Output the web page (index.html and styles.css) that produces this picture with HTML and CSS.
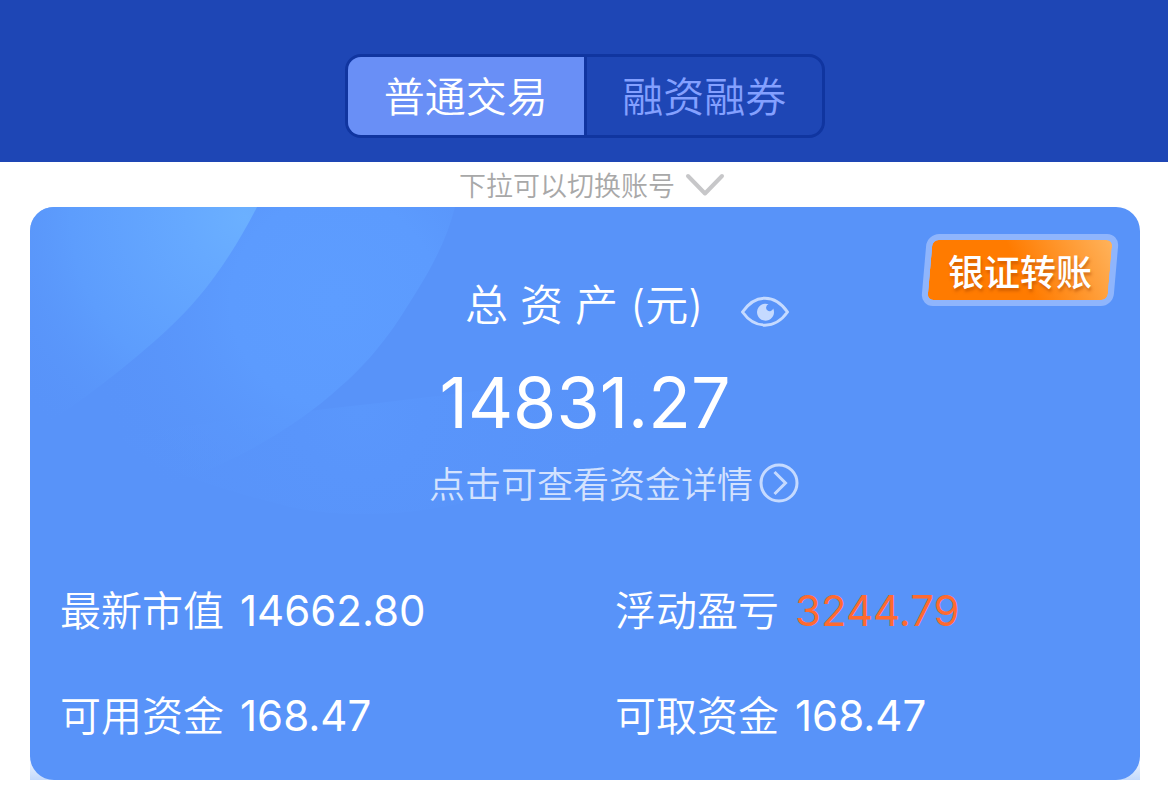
FILE: index.html
```html
<!DOCTYPE html>
<html lang="zh-CN">
<head>
<meta charset="utf-8">
<meta name="viewport" content="width=device-width, initial-scale=1">
<title>总资产</title>
<link rel="stylesheet" href="styles.css">
</head>
<body>
<header class="topbar">
  <nav class="tabs">
    <button type="button" class="tab tab-active">普通交易</button>
    <button type="button" class="tab">融资融券</button>
  </nav>
</header>
<main class="content">
  <button type="button" class="switch-hint">
    <span>下拉可以切换账号</span>
    <svg class="chevron" width="40" height="24" viewBox="0 0 40 24" fill="none" stroke="#c7c7c9" stroke-width="4" stroke-linecap="round" stroke-linejoin="round"><path d="M3 3 20 20.500 37 3"/></svg>
  </button>
  <div class="card-wrap">
    <section class="card">
      <svg class="card-art" width="760" height="340" viewBox="0 0 760 340" aria-hidden="true">
        <defs>
          <radialGradient id="glow-a" gradientUnits="userSpaceOnUse" cx="215" cy="10" r="290">
            <stop offset="0" stop-color="#6bb0ff"/><stop offset=".2" stop-color="#66a9ff"/><stop offset=".6" stop-color="#5d9dfd"/><stop offset="1" stop-color="#5893f9" stop-opacity="0"/>
          </radialGradient>
          <radialGradient id="glow-b" gradientUnits="userSpaceOnUse" cx="305" cy="95" r="260">
            <stop offset="0" stop-color="#5d9dff"/><stop offset=".4" stop-color="#5c9bfe"/><stop offset="1" stop-color="#5893f9" stop-opacity="0"/>
          </radialGradient>
          <radialGradient id="glow-c" gradientUnits="userSpaceOnUse" cx="330" cy="205" r="320">
            <stop offset="0" stop-color="#5a97fc"/><stop offset=".2" stop-color="#5995fb"/><stop offset="1" stop-color="#5893f9" stop-opacity="0"/>
          </radialGradient>
        </defs>
        <path fill="url(#glow-c)" d="M90 230C250 200 500 190 700 138 610 265 400 330 260 300 180 280 120 260 90 230Z"/>
        <path fill="url(#glow-b)" d="M0 0H425C415 40 395 72 370 111 350 141 330 163 310 180 265 222 200 256 153 273 100 292 50 303 0 308Z"/>
        <path fill="url(#glow-a)" d="M0 0H227C195 62 166 96 137 123 100 157 50 196 0 228Z"/>
      </svg>
      <button type="button" class="transfer">银证转账</button>
      <div class="row title-row">
        <h1 class="title">总 资 产 (元)</h1>
        <button type="button" class="icon-button" aria-label="显示或隐藏金额">
          <svg width="48" height="32" viewBox="0 0 48 32"><path d="M1.500 16C14-2.500 34-2.500 46.500 16 34 33.500 14 33.500 1.500 16Z" fill="none" stroke="#c5daff" stroke-width="3" stroke-linejoin="round"/><path d="M27.500 8.200A8.500 8.500 0 1 0 32.200 12.500 3.600 3.600 0 1 1 27.500 8.200Z" fill="#c5daff"/></svg>
        </button>
      </div>
      <p class="total">14831.27</p>
      <a class="row detail" href="#">
        <span class="detail-text">点击可查看资金详情</span>
        <svg width="40" height="40" viewBox="0 0 40 40" fill="none" stroke="#c5daff" stroke-width="3"><circle cx="20" cy="20" r="18"/><path d="m15.500 9 11 11-11 11"/></svg>
      </a>
      <dl class="stats">
        <div class="stat"><dt>最新市值</dt><dd>14662.80</dd></div>
        <div class="stat"><dt>浮动盈亏</dt><dd class="gain">3244.79</dd></div>
        <div class="stat"><dt>可用资金</dt><dd>168.47</dd></div>
        <div class="stat"><dt>可取资金</dt><dd>168.47</dd></div>
      </dl>
    </section>
  </div>
</main>
</body>
</html>
```
FILE: styles.css
```css
* { box-sizing: border-box; }
body {
  margin: 0;
  background: #fff;
  color: #fff;
  font-family: Inter, "Noto Sans CJK SC", sans-serif;
  font-size: 41px;
  font-weight: 350;
}
button {
  margin: 0;
  padding: 0;
  border: 0;
  background: none;
  color: inherit;
  font: inherit;
}
.topbar {
  display: flex;
  justify-content: center;
  padding: 54px 0 24px 2px;
  background: #1e46b5;
}
.tabs {
  display: flex;
  width: 480px;
  border: 3px solid #1035a0;
  border-radius: 16px;
  overflow: hidden;
}
.tab {
  flex: 1;
  height: 78px;
  padding-top: 2px;
  line-height: 76px;
  color: #84a0ff;
}
.tab + .tab { border-left: 3px solid #1035a0; }
.tab-active { background: #698ff6; color: #fff; }
.switch-hint {
  display: flex;
  align-items: center;
  justify-content: center;
  gap: 10px;
  width: 100%;
  height: 45px;
  padding-left: 16px;
  color: #a8a8a8;
  font-size: 27px;
}
.card-wrap {
  margin: 0 28px 0 30px;
  background: linear-gradient(#fff 95%, #c4dafc);
}
.card {
  position: relative;
  overflow: hidden;
  padding: 68px 0 34px;
  border-radius: 24px;
  background: #5893f9;
}
.card-art { position: absolute; top: 0; left: 0; }
.transfer {
  position: absolute;
  top: 27px;
  right: 24px;
  width: 192px;
  height: 72px;
  padding-top: 6px;
  font-size: 36px;
  font-weight: 500;
  line-height: 66px;
  text-shadow: 1px 3px 3px rgba(170, 70, 0, .5);
  isolation: isolate;
}
.transfer::before {
  content: "";
  position: absolute;
  inset: 0;
  z-index: -1;
  border: 6px solid #8fb5fc;
  border-radius: 12px;
  background: linear-gradient(60deg, #ff7b00 50%, #ffb35c) padding-box, #8fb5fc;
  transform: skewX(-5deg);
}
.row {
  position: relative;
  display: flex;
  align-items: center;
  justify-content: center;
}
.title-row { gap: 38px; padding-left: 84px; }
.title {
  margin: 0;
  font-size: 43px;
  font-weight: 350;
  line-height: 60px;
}
.icon-button { display: flex; padding-top: 14px; }
.total {
  position: relative;
  margin: 18px 0 0;
  font-size: 70px;
  font-weight: 400;
  line-height: 100px;
  text-align: center;
}
.detail {
  gap: 6px;
  margin-top: 6px;
  padding-left: 58px;
  color: #d3e2fe;
  font-size: 36px;
  line-height: 44px;
  text-decoration: none;
}
.detail-text { padding-top: 4px; }
.stats {
  position: relative;
  display: grid;
  grid-template-columns: 1fr 1fr;
  row-gap: 45px;
  margin: 74px 0 0;
}
.stat {
  display: flex;
  gap: 16px;
  padding-left: 30px;
  line-height: 60px;
}
.stat dd {
  margin: 0;
  font-size: 42px;
  font-weight: 400;
}
.stat .gain { color: #ff6a30; }
```
